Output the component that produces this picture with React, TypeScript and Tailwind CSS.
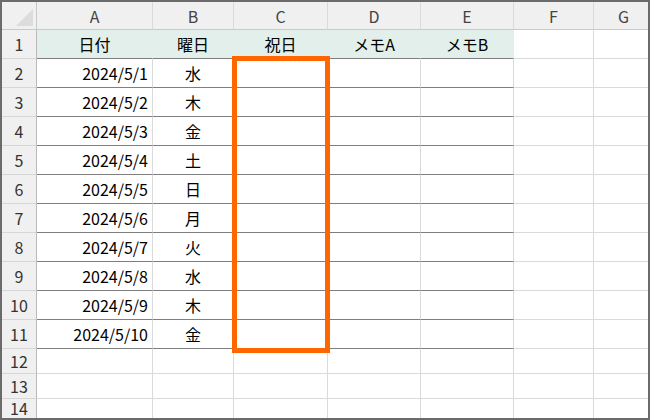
import React from "react";

const cols = [
  { key: "A", w: "w-[116px]" },
  { key: "B", w: "w-[81px]" },
  { key: "C", w: "w-[94px]" },
  { key: "D", w: "w-[93px]" },
  { key: "E", w: "w-[93px]" },
  { key: "F", w: "w-[80px]" },
  { key: "G", w: "w-[60px]" },
];

const dates = [
  ["2024/5/1", "水"],
  ["2024/5/2", "木"],
  ["2024/5/3", "金"],
  ["2024/5/4", "土"],
  ["2024/5/5", "日"],
  ["2024/5/6", "月"],
  ["2024/5/7", "火"],
  ["2024/5/8", "水"],
  ["2024/5/9", "木"],
  ["2024/5/10", "金"],
];

const headers = ["日付", "曜日", "祝日", "メモA", "メモB"];

function RowHeader({ n, h, top }: { n: number; h: string; top?: boolean }) {
  return (
    <div
      className={`w-[35px] ${h} shrink-0 flex justify-center bg-[#f0f0f0] border-r border-b border-r-[#b9b9b9] border-b-[#d6d6d6] text-[#333] text-[16px] ${
        top ? "items-start pt-[2px] leading-[14px]" : "items-center"
      }`}
    >
      {n}
    </div>
  );
}

export default function App() {
  return (
    <div
      className="relative w-[650px] h-[420px] border-2 border-[#6b6b6b] overflow-hidden bg-white text-black"
      style={{ fontFamily: '"Noto Sans CJK JP", "Noto Sans", sans-serif' }}
    >
      {/* column header row */}
      <div className="flex h-[28px]">
        <div className="w-[35px] shrink-0 bg-[#f0f0f0] border-r border-b border-[#c9c9c9] relative">
          <svg className="absolute right-[3px] bottom-[3px]" width="17" height="17" viewBox="0 0 17 17">
            <polygon points="17,0 17,17 0,17" fill="#dcdcdc" />
          </svg>
        </div>
        {cols.map((c) => (
          <div
            key={c.key}
            className={`${c.w} shrink-0 flex items-center justify-center bg-[#f0f0f0] border-r border-b border-r-[#dadada] border-b-[#c9c9c9] text-[#444] text-[16px]`}
          >
            {c.key}
          </div>
        ))}
      </div>

      {/* row 1 */}
      <div className="flex h-[29px]">
        <RowHeader n={1} h="h-[29px]" />
        {cols.map((c, i) => (
          <div
            key={c.key}
            className={`${c.w} shrink-0 flex items-center justify-center border-r border-b text-[16px] ${
              i < 5
                ? "bg-[#e2efea] border-r-[#e2efea] border-b-[#7f7f7f]"
                : "border-r-[#dadada] border-b-[#dadada]"
            }`}
          >
            {i < 5 ? headers[i] : ""}
          </div>
        ))}
      </div>

      {/* rows 2-11 */}
      {dates.map(([d, w], r) => (
        <div key={d} className="flex h-[29px]">
          <RowHeader n={r + 2} h="h-[29px]" />
          {cols.map((c, i) => (
            <div
              key={c.key}
              className={`${c.w} shrink-0 flex items-center border-r border-b text-[16px] border-r-[#dadada] ${
                i < 5 ? "border-b-[#7f7f7f]" : "border-b-[#dadada]"
              } ${i === 0 ? "justify-end pr-[4px]" : "justify-center"}`}
            >
              {i === 0 ? d : i === 1 ? w : ""}
            </div>
          ))}
        </div>
      ))}

      {/* rows 12-14 */}
      {[12, 13, 14].map((n) => (
        <div key={n} className={`flex ${n === 14 ? "h-[20px]" : "h-[25px]"}`}>
          <RowHeader n={n} h={n === 14 ? "h-[20px]" : "h-[25px]"} top={n === 14} />
          {cols.map((c) => (
            <div key={c.key} className={`${c.w} shrink-0 border-r border-b border-[#dadada]`} />
          ))}
        </div>
      ))}

      {/* highlight around C2:C11 */}
      <div className="absolute left-[230px] top-[54px] w-[98px] h-[297px] border-[5px] border-[#ff6600]" />
    </div>
  );
}
